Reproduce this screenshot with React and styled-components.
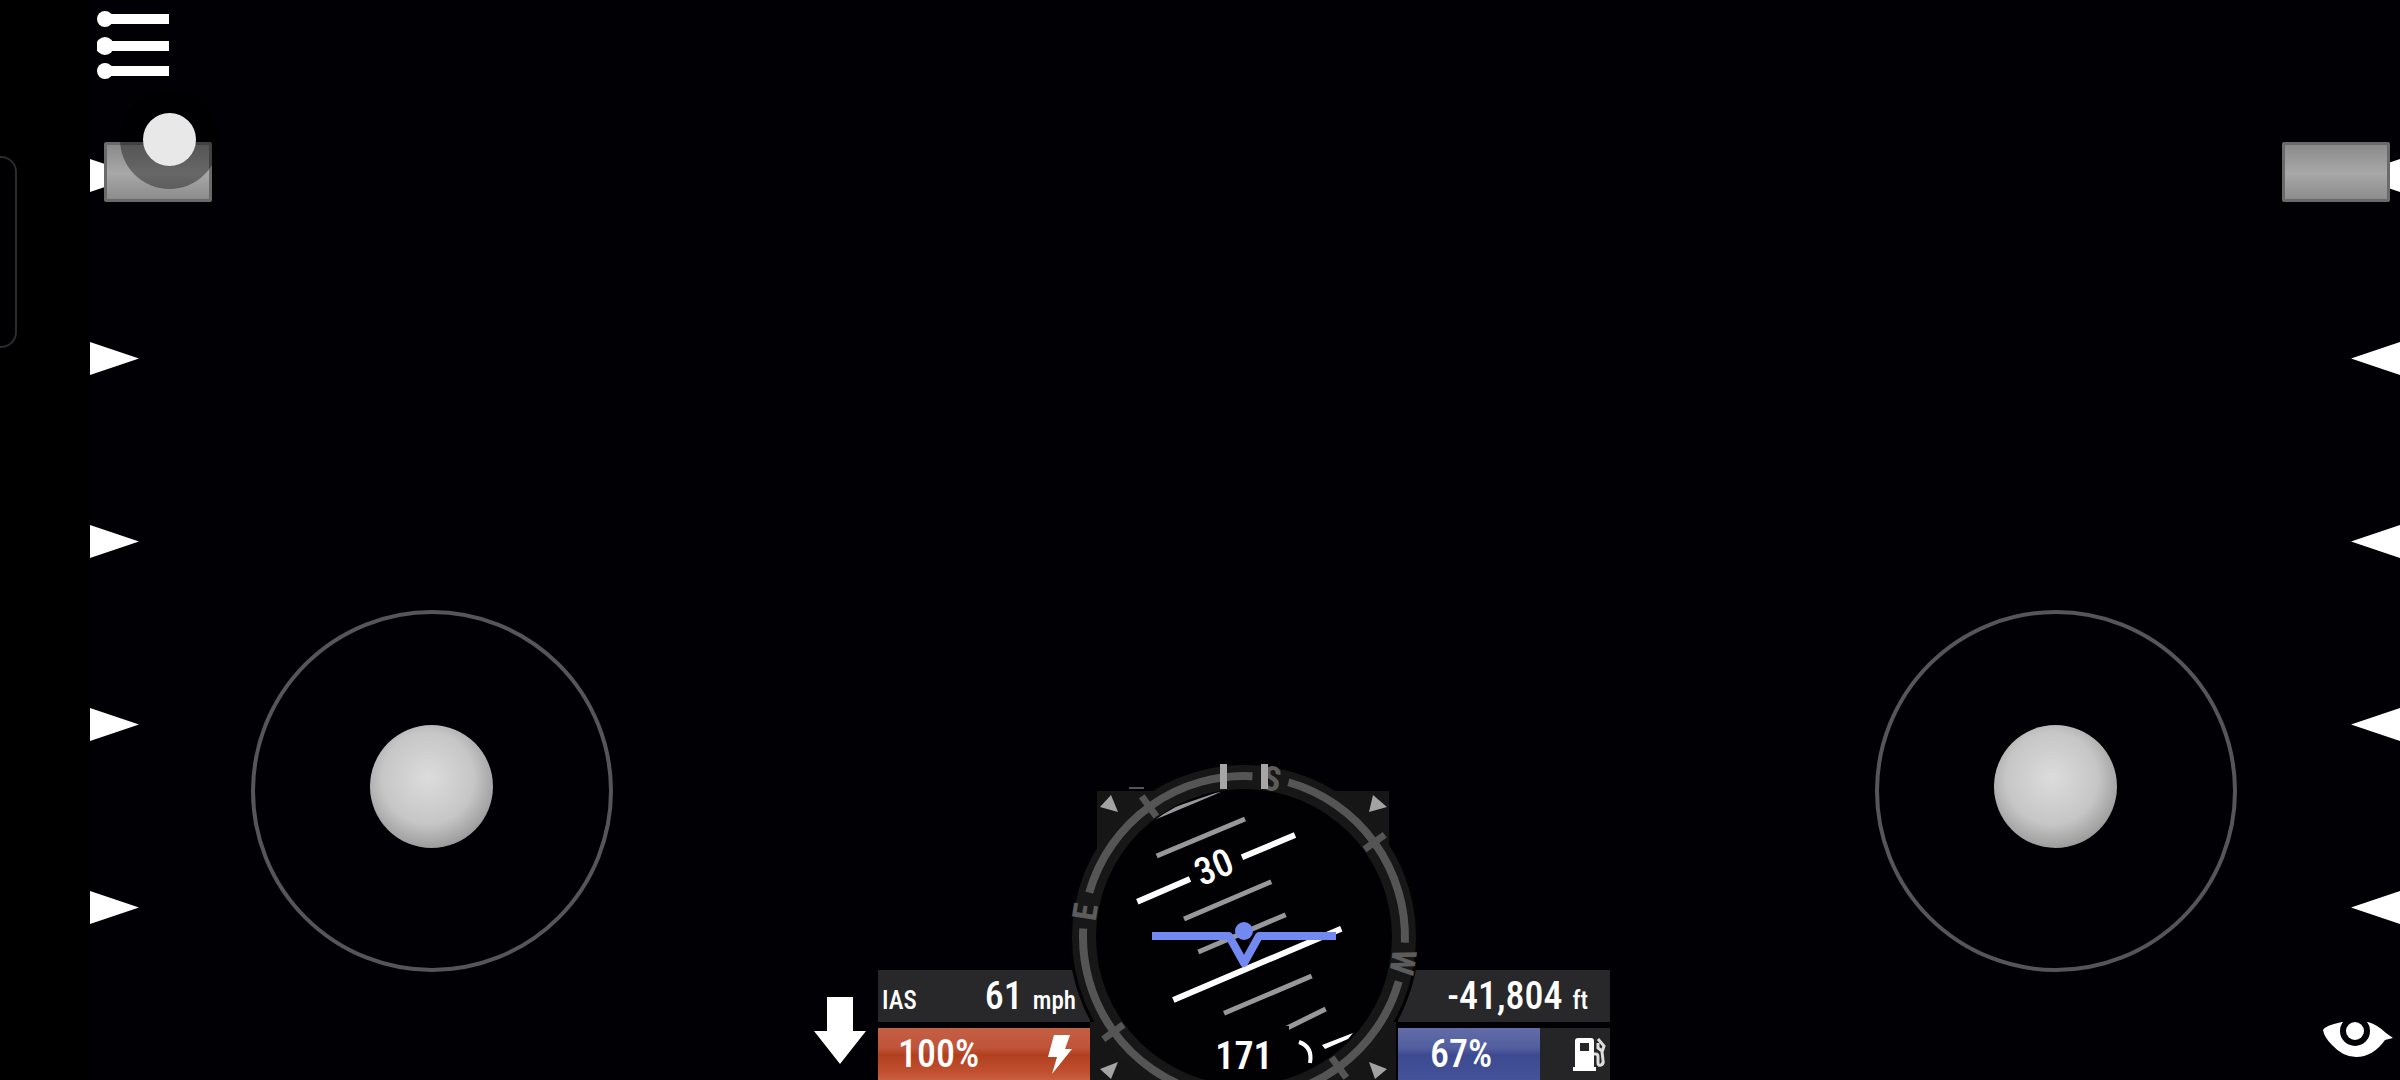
import React, { useState } from "react";
import styled, { createGlobalStyle } from "styled-components";

const GlobalStyle = createGlobalStyle`
  * { box-sizing: border-box; }
  body {
    margin: 0;
    background: #000;
    overflow: hidden;
  }
`;

const FONT = `"Liberation Sans Narrow", "Roboto Condensed", Roboto, sans-serif`;
const MARKERS = [0, 1, 2, 3, 4];
const TICKS = [-36, 54, 144, 234];
const LETTERS = [
  { label: "S", angle: 10 },
  { label: "W", angle: 99 },
  { label: "E", angle: 279 },
];
const PITCH_MINOR = [
  [-87.3, -81, 1, -118],
  [-60, -18, 27.3, -55.3],
  [-45.7, 15, 41.7, -22.3],
  [-20, 76.3, 67.7, 39],
  [31, 97, 81.7, 72],
];
const PITCH_MAJOR = [
  [-106.7, -35.3, -54, -58],
  [-2, -79.7, 51, -102],
  [-70.7, 63, 97.3, -8.3],
];

const polar = (r, deg) => {
  const a = (deg * Math.PI) / 180;
  return `${(r * Math.sin(a)).toFixed(2)} ${(-r * Math.cos(a)).toFixed(2)}`;
};
const arc = (r, from, to) => `M${polar(r, from)}A${r} ${r} 0 0 1 ${polar(r, to)}`;

const Dial = () => (
  <DialSvg viewBox="-173 -174 346 317" role="img" aria-label="Attitude indicator">
    <defs>
      <clipPath id="horizon">
        <circle r="147" />
      </clipPath>
    </defs>
    <circle r="175" fill="#020204" />
    <path d="M-147-146H145V85H152V143H-154V85H-147Z" fill="#161616" />
    <circle r="172" fill="#171718" />
    <circle r="148" fill="#010103" />

    <g fill="none" stroke="#555556" strokeWidth="8">
      <path d={arc(161, -74, 3)} />
      <path d={arc(161, 16, 92)} />
      <path d={arc(161, 106, 182)} />
      <path d={arc(161, 196, 273)} />
    </g>
    {TICKS.map((deg) => (
      <path key={deg} d="M0-149V-174" transform={`rotate(${deg})`} stroke="#555556" strokeWidth="7" />
    ))}
    {LETTERS.map(({ label, angle }) => (
      <CompassLetter key={label} y="-149" transform={`rotate(${angle})`}>
        {label}
      </CompassLetter>
    ))}
    <path d="M-24-173h7v25h-7zM17-173h7v25h-7z" fill="#a6a6a6" />
    <path d="M-115-149H-100" stroke="#aaa" strokeWidth="1" />
    <g fill="#a3a3a3">
      <path d="M-133-142L-144-130-126-125Z" />
      <path d="M129-142L143-130 125-125Z" />
      <path d="M-144 132L-126 125-133 142Z" />
      <path d="M125 125L143 132 131 142Z" />
    </g>

    <g clipPath="url(#horizon)">
      <g stroke="#98989a" strokeWidth="5">
        {PITCH_MINOR.map(([x1, y1, x2, y2]) => (
          <line key={y1} x1={x1} y1={y1} x2={x2} y2={y2} />
        ))}
      </g>
      <path d="M-92-116L-72-129-17-148-30-142Z" fill="#98989a" />
      <g stroke="#fff" strokeWidth="6">
        {PITCH_MAJOR.map(([x1, y1, x2, y2]) => (
          <line key={y1} x1={x1} y1={y1} x2={x2} y2={y2} />
        ))}
      </g>
      <PitchNumber transform="translate(-30 -70) rotate(-23)" y="13">30</PitchNumber>
      <rect x="-45" y="89" width="90" height="54" fill="#010103" />
      <path d="M78 108L109 96 104 102 81 112Z" fill="#fff" />
      <path d="M55 105Q69 110 66 126" fill="none" stroke="#fff" strokeWidth="4" />
    </g>

    <g fill="none" stroke="#7389f2" strokeWidth="8">
      <path d="M-92-1H-15L0 26 15-1H92" strokeLinejoin="round" />
      <circle cy="-6" r="9" fill="#7389f2" stroke="none" />
    </g>
    <Heading y="132">171</Heading>
  </DialSvg>
);

const SideSlider = ({ side, label }) => {
  const [value, setValue] = useState(100);
  return (
    <Track>
      <Markers $side={side} aria-hidden>
        {MARKERS.map((m) => (
          <Marker key={m} viewBox="0 0 49 33">
            <path d={side === "left" ? "M0 0L49 16.500 0 33Z" : "M49 0L0 16.500 49 33Z"} />
          </Marker>
        ))}
      </Markers>
      <Range
        type="range"
        aria-label={label}
        $side={side}
        value={value}
        onChange={(e) => setValue(e.target.value)}
      />
    </Track>
  );
};

const App = () => (
  <>
    <GlobalStyle />
    <Screen>
      <Bezel>
        <EdgePanel />
      </Bezel>
      <Stage>
        <Rail>
          <TopSlot>
            <IconButton aria-label="Menu" $left={7}>
              <svg width="72" height="70" viewBox="0 0 72 70" fill="#fff">
                <path d="M8 4H72V14H8zM8 31H72V41H8zM8 56H72V66H8z" />
                <circle cx="8" cy="9" r="8" />
                <circle cx="8" cy="36" r="9" />
                <circle cx="8" cy="61" r="8" />
              </svg>
            </IconButton>
          </TopSlot>
          <SideSlider side="left" label="Throttle" />
          <BottomSlot />
          <Touch />
        </Rail>

        <StickPad $align="flex-start">
          <Ring><Knob /></Ring>
        </StickPad>

        <Hud>
          <ArrowCell>
            <svg width="52" height="67" viewBox="0 0 52 67" fill="#fff" aria-hidden>
              <path d="M13 0H39V34H52L26 67 0 34H13Z" />
            </svg>
          </ArrowCell>
          <Readouts>
            <Panel>
              <Unit>IAS</Unit>
              <Reading>
                <Value>61</Value>
                <Unit>mph</Unit>
              </Reading>
            </Panel>
            <Meter role="meter" aria-label="Energy" aria-valuenow={100}>
              <Fill $tone="orange" style={{ width: "100%" }} />
              <MeterRow>
                <Value>100%</Value>
                <svg width="24" height="39" viewBox="0 0 24 39" fill="#fff" aria-hidden>
                  <path d="M6 0H22L17 14H24L4 39 9 22H0Z" />
                </svg>
              </MeterRow>
            </Meter>
          </Readouts>
          <Dial />
          <Readouts>
            <Panel $end>
              <Reading>
                <Value>-41,804</Value>
                <Unit>ft</Unit>
              </Reading>
            </Panel>
            <Meter role="meter" aria-label="Fuel" aria-valuenow={67}>
              <Fill $tone="blue" style={{ width: "67%" }} />
              <MeterRow $fuel>
                <Value>67%</Value>
                <svg width="33" height="33" viewBox="0 0 33 33" aria-hidden>
                  <path
                    d="M2 29V3Q2 0 5 0H18Q21 0 21 3V29H23V33H0V29ZM7 5V13H16V5Z"
                    fill="#fff"
                    fillRule="evenodd"
                  />
                  <path
                    d="M21 16H23Q25 16 25 19V25Q25 28 28 27 31 26 30 22L29 14 31 8 25 1M25 5V10L29 13"
                    fill="none"
                    stroke="#ddd"
                    strokeWidth="3"
                  />
                </svg>
              </MeterRow>
            </Meter>
          </Readouts>
        </Hud>

        <StickPad $align="flex-end">
          <Ring><Knob /></Ring>
        </StickPad>

        <Rail>
          <TopSlot />
          <SideSlider side="right" label="Flaps" />
          <BottomSlot>
            <IconButton aria-label="Change view" $left={44}>
              <svg width="72" height="36" viewBox="0 0 72 36">
                <path
                  d="M1 9Q4 4 20 1H46Q56 4 64 12L71 17 63 19Q51 36 34 36 21 36 10 24 2 16 1 9Z"
                  fill="#fff"
                />
                <circle cx="33" cy="10" r="15" fill="#010105" />
                <circle cx="33" cy="10" r="9" fill="#fff" />
              </svg>
            </IconButton>
          </BottomSlot>
        </Rail>
      </Stage>
    </Screen>
  </>
);

/* ---------- Page frame ---------- */
const Screen = styled.main`
  display: flex;
  width: 100%;
  height: 100vh;
  overflow: hidden;
  background: #000;
  color: #fff;
  font-family: ${FONT};
`;

const Bezel = styled.div`
  flex: 0 0 90px;
  padding-top: 156px;
`;

const EdgePanel = styled.div`
  width: 17px;
  height: 192px;
  border: 2px solid #2a2c2e;
  border-left: 0;
  border-radius: 0 16px 16px 0;
  background: #000003;
`;

const Stage = styled.div`
  flex: 1;
  min-width: 0;
  display: grid;
  grid-template-columns: 120px 1fr auto 1fr 122px;
  background: #010105;
`;

/* ---------- Side rails ---------- */
const Rail = styled.div`
  position: relative;
  display: flex;
  flex-direction: column;
  min-height: 0;
`;

const TopSlot = styled.div`
  flex: 0 0 142px;
  padding-top: 10px;
`;

const BottomSlot = styled.div`
  flex: 0 0 139px;
  padding-top: 80px;
`;

const IconButton = styled.button`
  display: block;
  margin: 0 0 0 ${(p) => p.$left}px;
  padding: 0;
  border: 0;
  background: none;
  cursor: pointer;

  svg { display: block; }
`;

const Track = styled.div`
  flex: 1;
  min-height: 0;
  display: grid;
  grid-template: minmax(0, 1fr) / 1fr;
`;

const Markers = styled.div`
  grid-area: 1 / 1;
  display: flex;
  flex-direction: column;
  justify-content: space-between;
  align-items: ${(p) => (p.$side === "left" ? "flex-start" : "flex-end")};
  padding: 17px 0;
`;

const Marker = styled.svg`
  width: 49px;
  height: 33px;
  fill: #fff;
`;

const Range = styled.input`
  grid-area: 1 / 1;
  z-index: 1;
  justify-self: ${(p) => (p.$side === "left" ? "start" : "end")};
  appearance: none;
  writing-mode: vertical-lr;
  direction: rtl;
  width: 108px;
  height: 100%;
  margin: ${(p) => (p.$side === "left" ? "0 0 0 14px" : "0 10px 0 0")};
  background: transparent;
  cursor: pointer;

  &::-webkit-slider-thumb {
    appearance: none;
    width: 108px;
    height: 60px;
    border: 3px solid #6a6a6a;
    border-radius: 2px;
    background: linear-gradient(#8a8a8a, #a8a8a8 52%, #8c8c8c);
  }
`;

/* finger position, with the shaded halo round it */
const Touch = styled.div`
  position: absolute;
  z-index: 2;
  top: 113px;
  left: 53px;
  width: 53px;
  height: 53px;
  border-radius: 50%;
  background: #e8e8e8;
  box-shadow: 0 0 0 23px rgba(0, 0, 0, 0.38);
  pointer-events: none;
`;

/* ---------- Joysticks ---------- */
const StickPad = styled.div`
  display: flex;
  align-items: flex-end;
  justify-content: ${(p) => p.$align};
  padding: 0 41px 108px;
`;

const Ring = styled.div`
  display: grid;
  place-items: center;
  width: 362px;
  height: 362px;
  padding: 0 2px 10px 0;
  border: 4px solid #56565a;
  border-radius: 50%;
`;

const Knob = styled.div`
  width: 123px;
  height: 123px;
  border-radius: 50%;
  background: radial-gradient(circle at 47% 43%, #dcdcdc, #c6c6c6 48%, #a2a2a2 70%, #808080 88%);
`;

/* ---------- HUD ---------- */
const Hud = styled.section`
  display: grid;
  grid-template-columns: 64px 212px 308px 212px 64px;
  align-items: end;
`;

const ArrowCell = styled.div`
  padding-bottom: 16px;

  svg { display: block; }
`;

const Readouts = styled.div`
  display: flex;
  flex-direction: column;
  gap: 6px;
`;

const Panel = styled.div`
  display: flex;
  align-items: baseline;
  justify-content: ${(p) => (p.$end ? "flex-end" : "space-between")};
  height: 52px;
  padding: 0 ${(p) => (p.$end ? 22 : 14)}px 0 4px;
  background: #28282a;
  line-height: 52px;
`;

const Reading = styled.div`
  display: flex;
  align-items: baseline;
  gap: 10px;
`;

const Value = styled.span`
  font-size: 38px;
  font-weight: 500;
`;

const Unit = styled.span`
  font-size: 25px;
  font-weight: 500;
`;

const Meter = styled.div`
  display: grid;
  height: 52px;
  background: #252527;
`;

const Fill = styled.div`
  grid-area: 1 / 1;
  background: ${(p) =>
    p.$tone === "orange"
      ? "linear-gradient(#c46045, #c0543a 38%, #b24020 52%, #c05030 85%, #c86040)"
      : "linear-gradient(#626ca8, #525e9f 38%, #3c4a90 52%, #44529a)"};
`;

const MeterRow = styled.div`
  grid-area: 1 / 1;
  display: flex;
  align-items: center;
  justify-content: space-between;
  padding: ${(p) => (p.$fuel ? "0 4px 0 32px" : "0 18px 0 20px")};
  line-height: 52px;
`;

const DialSvg = styled.svg`
  position: relative;
  display: block;
  width: 346px;
  height: 317px;
  margin: 0 -19px;
  overflow: visible;
`;

const DialText = styled.text`
  fill: #fff;
  font-family: ${FONT};
  font-size: 38px;
  font-weight: 500;
  text-anchor: middle;
`;

const Heading = styled(DialText)`
  font-weight: 600;
`;

const PitchNumber = styled(DialText)``;

const CompassLetter = styled(DialText)`
  fill: #5c5c5d;
  font-size: 34px;
  font-weight: 700;
`;

export default App;
